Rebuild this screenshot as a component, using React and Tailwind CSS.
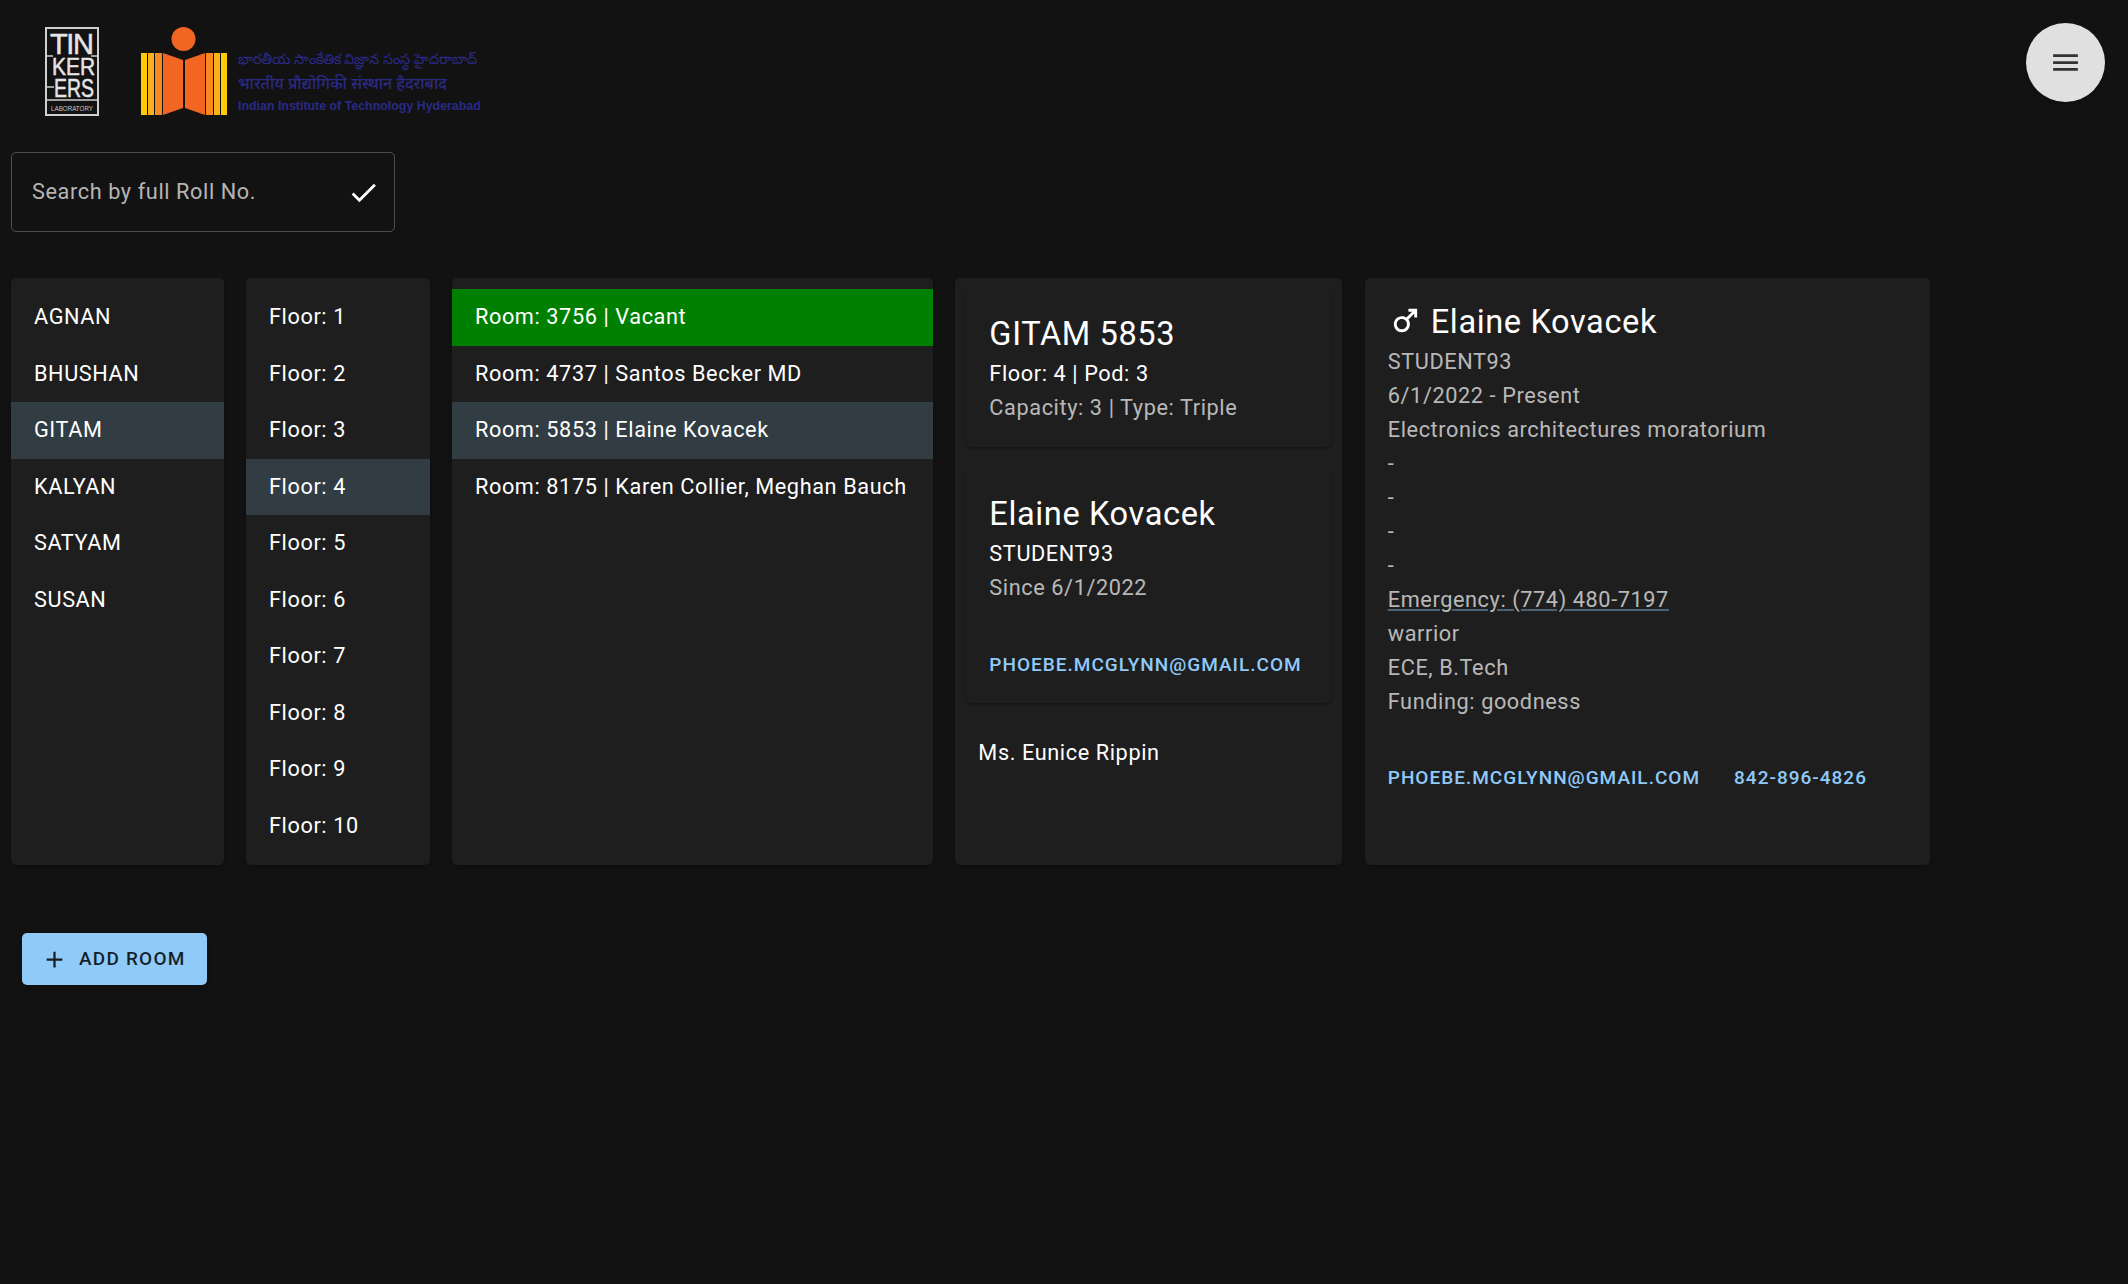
const halls = ["AGNAN", "BHUSHAN", "GITAM", "KALYAN", "SATYAM", "SUSAN"];
const floors = [1, 2, 3, 4, 5, 6, 7, 8, 9, 10];
const rooms = [
  { label: "Room: 3756 | Vacant", className: "bg-[#008000]" },
  { label: "Room: 4737 | Santos Becker MD", className: "" },
  { label: "Room: 5853 | Elaine Kovacek", className: "bg-[#313c43]" },
  { label: "Room: 8175 | Karen Collier, Meghan Bauch", className: "" },
];
const details = [
  "STUDENT93",
  "6/1/2022 - Present",
  "Electronics architectures moratorium",
  "-",
  "-",
  "-",
  "-",
];

function TinkersLogo() {
  return (
    <svg width="54" height="89" viewBox="0 0 54 89" className="shrink-0">
      <rect x="1" y="1" width="52" height="87" fill="none" stroke="#d0d0d0" strokeWidth="2" />
      <g fill="#e4e4e4" stroke="#e4e4e4" strokeWidth="0.5" fontFamily="Liberation Sans, sans-serif">
        <text x="5" y="27" fontSize="29" textLength="44" lengthAdjust="spacing">TIN</text>
        <text x="7" y="48" fontSize="23" textLength="43" lengthAdjust="spacingAndGlyphs">KER</text>
        <text x="9" y="70" fontSize="26" textLength="40" lengthAdjust="spacingAndGlyphs">ERS</text>
      </g>
      <path d="M1 73h52M1 29h7M1 60h8M46 29h7" stroke="#d0d0d0" strokeWidth="1.5" fill="none" />
      <text x="6" y="84" fontSize="7.5" fill="#c8c8c8" fontFamily="Liberation Sans, sans-serif" textLength="42" lengthAdjust="spacingAndGlyphs">LABORATORY</text>
    </svg>
  );
}

function IithLogo() {
  return (
    <svg width="86" height="89" viewBox="0 0 86 89" className="shrink-0">
      <circle cx="42.5" cy="12" r="12" fill="#f26522" />
      <rect x="0" y="26" width="6" height="62" fill="#ffcb05" />
      <rect x="7" y="26" width="6" height="62" fill="#fbb01a" />
      <rect x="14" y="26" width="7" height="62" fill="#f6891f" />
      <rect x="65" y="26" width="7" height="62" fill="#f6891f" />
      <rect x="73" y="26" width="6" height="62" fill="#fbb01a" />
      <rect x="80" y="26" width="6" height="62" fill="#ffcb05" />
      <path d="M22 26 L42 33 V81 L22 88 Z" fill="#f26522" />
      <path d="M64 26 L44 33 V81 L64 88 Z" fill="#f26522" />
    </svg>
  );
}

function ListPanel({ items, selected, width }) {
  return (
    <div className={`${width} h-[587px] shrink-0 rounded-[5px] bg-[#1e1e1e] py-[11px] shadow-md`}>
      {items.map((item) => (
        <div
          key={item}
          className={`flex h-[56.5px] items-center px-[23px] ${item === selected ? "bg-[#313c43]" : ""}`}
        >
          {item}
        </div>
      ))}
    </div>
  );
}

export default function App() {
  return (
    <div className="min-h-screen bg-[#121212] font-['Roboto',sans-serif] text-[21.7px] leading-[34px] tracking-[0.6px] text-white">
      <div className="flex h-[152px] items-start justify-between pr-[23px] pl-[45px] tracking-normal">
        <div className="flex gap-[42px] pt-[27px]">
          <TinkersLogo />
          <div className="flex gap-[11px]">
            <IithLogo />
            <div className="flex flex-col pt-[19px] text-[#2a2a86] font-['Noto_Sans','Liberation_Sans',sans-serif]">
              <div className="text-[14.3px] leading-[25px] font-medium">భారతీయ సాంకేతిక విజ్ఞాన సంస్థ హైదరాబాద్</div>
              <div className="text-[16px] leading-[25px] font-medium">भारतीय प्रौद्योगिकी संस्थान हैदराबाद</div>
              <div className="mt-[2px] text-[12.4px] leading-[17px] font-bold font-['Liberation_Sans',sans-serif]">
                Indian Institute of Technology Hyderabad
              </div>
            </div>
          </div>
        </div>
        <button className="mt-[23px] flex size-[79px] items-center justify-center rounded-full bg-[#e0e0e0] shadow-md">
          <svg viewBox="0 0 24 24" className="size-[33px] fill-[#333333]">
            <path d="M3 18h18v-2H3v2zm0-5h18v-2H3v2zm0-7v2h18V6H3z" />
          </svg>
        </button>
      </div>

      <div className="ml-[11px] flex h-[80px] w-[384px] items-center rounded-[5px] border border-white/25 pr-[14px] pl-[20px]">
        <input
          placeholder="Search by full Roll No."
          className="min-w-0 flex-1 bg-transparent tracking-[0.6px] outline-none placeholder:text-white/70"
        />
        <svg viewBox="0 0 24 24" className="size-[33px] fill-white">
          <path d="M9 16.17 4.83 12l-1.42 1.41L9 19 21 7l-1.41-1.41z" />
        </svg>
      </div>

      <div className="mt-[46px] flex gap-[22.4px] pl-[11px]">
        <ListPanel items={halls} selected="GITAM" width="w-[212.6px]" />
        <ListPanel items={floors.map((f) => `Floor: ${f}`)} selected="Floor: 4" width="w-[183.6px]" />

        <div className="h-[587px] w-[481px] shrink-0 rounded-[5px] bg-[#1e1e1e] py-[11px] shadow-md">
          {rooms.map((room) => (
            <div key={room.label} className={`flex h-[56.5px] items-center px-[23px] ${room.className}`}>
              {room.label}
            </div>
          ))}
        </div>

        <div className="h-[587px] w-[387px] shrink-0 rounded-[5px] bg-[#1e1e1e] px-[11px] py-[11px] shadow-md">
          <div className="h-[158px] rounded-[5px] p-[23px] pt-[22px] shadow-[0_2px_3px_rgba(0,0,0,0.3)]">
            <div className="text-[32.6px] leading-[46px]">GITAM 5853</div>
            <div>Floor: 4 | Pod: 3</div>
            <div className="text-white/70">Capacity: 3 | Type: Triple</div>
          </div>
          <div className="mt-[22px] h-[234px] rounded-[5px] p-[23px] pt-[22px] shadow-[0_2px_3px_rgba(0,0,0,0.3)]">
            <div className="text-[32.6px] leading-[46px]">Elaine Kovacek</div>
            <div>STUDENT93</div>
            <div className="text-white/70">Since 6/1/2022</div>
            <div className="mt-[43px] text-[19px] leading-[34px] font-medium tracking-[1px] text-[#90caf9]">
              PHOEBE.MCGLYNN@GMAIL.COM
            </div>
          </div>
          <div className="mt-[33px] px-[12px]">Ms. Eunice Rippin</div>
        </div>

        <div className="h-[587px] w-[565px] shrink-0 rounded-[5px] bg-[#1e1e1e] px-[23px] pt-[21px] shadow-md">
          <div className="flex items-center gap-[8px] text-[32.6px] leading-[46px]">
            <svg viewBox="0 0 24 24" className="size-[35px] -translate-y-[2px] fill-white">
              <path d="M9.5 11c1.93 0 3.5 1.57 3.5 3.5S11.43 18 9.5 18 6 16.43 6 14.5 7.57 11 9.5 11zm0-2C6.46 9 4 11.46 4 14.5S6.46 20 9.5 20s5.5-2.46 5.5-5.5c0-1.16-.36-2.23-.97-3.12L18 7.42V10h2V4h-6v2h2.58l-3.97 3.97C11.73 9.36 10.66 9 9.5 9z" />
            </svg>
            Elaine Kovacek
          </div>
          <div className="text-white/70">
            {details.map((line, i) => (
              <div key={i}>{line}</div>
            ))}
            <div className="underline decoration-[#90caf9]/40 underline-offset-2">Emergency: (774) 480-7197</div>
            <div>warrior</div>
            <div>ECE, B.Tech</div>
            <div>Funding: goodness</div>
          </div>
          <div className="mt-[42px] flex gap-[34px] text-[19px] leading-[34px] font-medium tracking-[1px] text-[#90caf9]">
            <span>PHOEBE.MCGLYNN@GMAIL.COM</span>
            <span>842-896-4826</span>
          </div>
        </div>
      </div>

      <button className="mt-[68px] ml-[22px] flex h-[52px] w-[185px] items-center gap-[11px] rounded-[5px] bg-[#90caf9] pl-[19px] text-[19px] font-medium tracking-[1.2px] text-black/85 shadow-md">
        <svg viewBox="0 0 24 24" className="size-[27px] fill-current">
          <path d="M19 13h-6v6h-2v-6H5v-2h6V5h2v6h6v2z" />
        </svg>
        ADD ROOM
      </button>
    </div>
  );
}
